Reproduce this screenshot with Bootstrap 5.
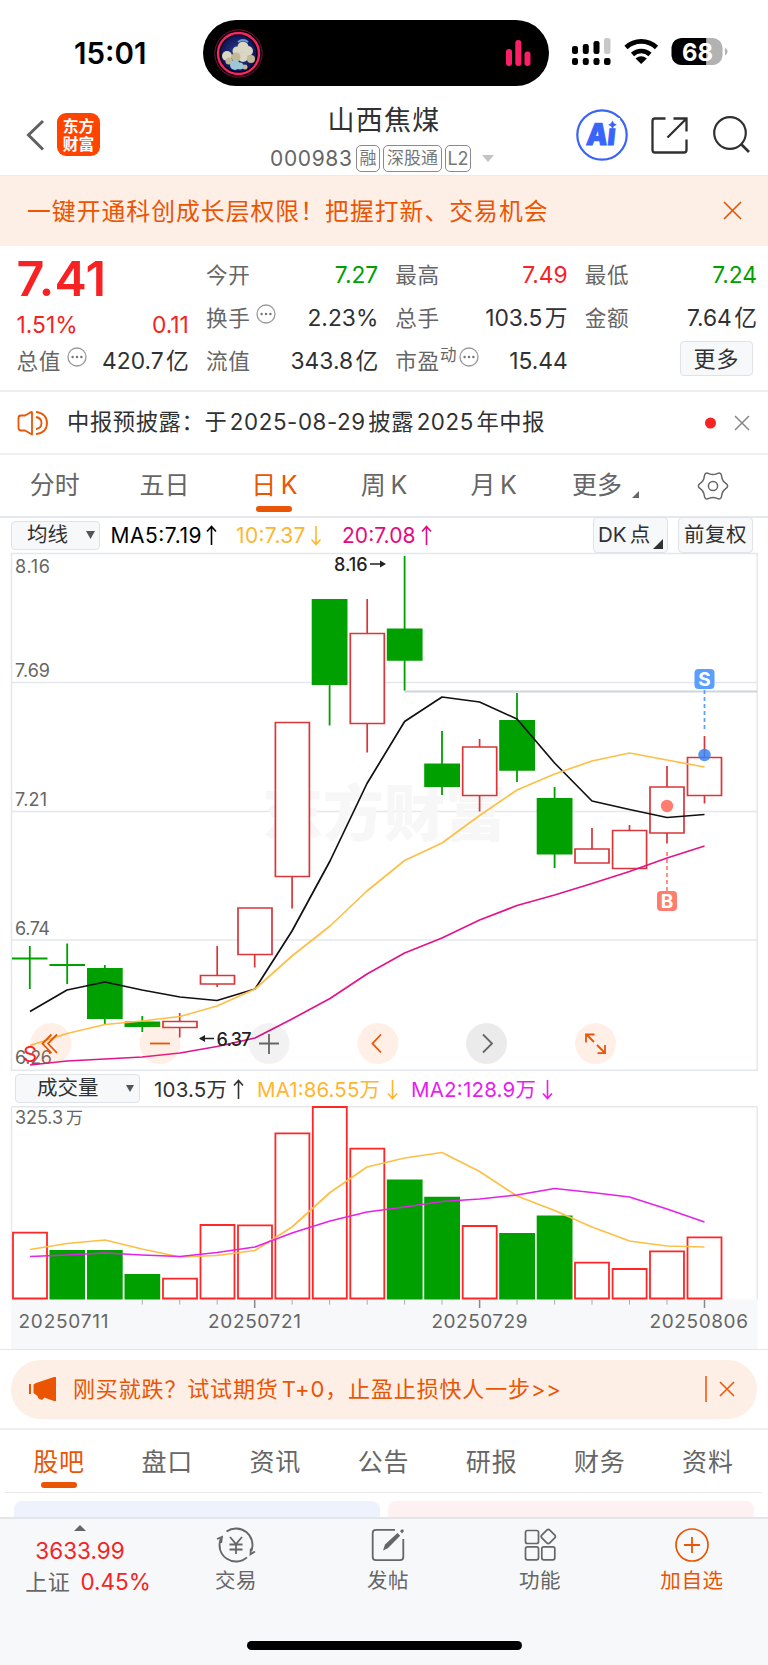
<!DOCTYPE html>
<html lang="zh-CN">
<head>
<meta charset="utf-8">
<meta name="viewport" content="width=device-width, initial-scale=1">
<title>山西焦煤 000983</title>
<link href="https://cdn.jsdelivr.net/npm/bootstrap@5.3.0/dist/css/bootstrap.min.css" rel="stylesheet">
<style>
:root{--o:#ea5504;--r:#f62223;--g:#00a000;--t:#303133;--m:#666;--ln:#ebebee}
body{font-family:Inter,"Noto Sans CJK SC",sans-serif;color:var(--t);background:#fff;width:768px;height:1665px;overflow:hidden;line-height:1}
svg{display:block;flex:none}
svg text{font-family:Inter,"Noto Sans CJK SC",sans-serif}
.c-o{color:var(--o)}.c-r{color:var(--r)}.c-g{color:var(--g)}.c-m{color:var(--m)}
.statusbar{height:86px}
.clock{width:202.500px;padding-left:74px;font-size:29.5px;font-weight:600;color:#000;padding-top:33px;height:86px;line-height:40px}
.island{width:346px;height:66px;margin-top:20px;background:#000;border-radius:33px;padding:0 18px 0 11px}
.topnav{height:90px;display:grid;grid-template-columns:270px 228px 270px;border-bottom:1px solid var(--ln)}
.stockname{font-size:27px;letter-spacing:1.3px;height:36px;line-height:36px;color:#303133}
.codeline{height:28px;font-size:21px;letter-spacing:.65px}
.tagbox{border:1.3px solid #8a8a8a;border-radius:5px;height:27px;line-height:25px;font-size:17px;letter-spacing:0;color:#777;text-align:center}
.promo{height:70px;background:#fdeee6;padding:2px 26px 0 27px;font-size:23.8px;letter-spacing:1.04px;color:var(--o)}
.quotes{height:146px;display:grid;grid-template-columns:repeat(4,172.4px);column-gap:17px;padding:8px 0 0 16.5px;border-bottom:2px solid #efeff1}
.qrow{height:43px;font-size:22.8px;word-spacing:-4px}
.qrow .lbl{font-size:21.6px;letter-spacing:.7px;color:var(--m)}
.price{height:56px;font-size:48.5px;font-weight:600;line-height:50px;letter-spacing:.3px}
.morebtn{width:73px;height:35px;font-size:22px;letter-spacing:1px;background:#f7f8fa;border:1px solid #dfe2e8;border-radius:4px;margin-right:4px;margin-top:1px}
.notice{height:63px;border-bottom:2px solid #efeff1;padding-left:17px;padding-right:18px;font-size:22.3px;letter-spacing:.6px;word-spacing:-4.3px}
.tabbar{height:63px;border-bottom:2px solid #e6e8ef;font-size:25px;color:var(--m);word-spacing:-2.5px}
.tabbar>div,.tabbar2>div{flex:1 1 0;position:relative;text-align:center}
.cur::after{content:"";position:absolute;left:50%;margin-left:-18px;width:36px;height:6px;border-radius:3px;background:var(--o)}
.tabbar .cur::after{bottom:-1px}
.tabbar>div{height:56px;line-height:61px}
.marow{height:34px;font-size:21px;padding-left:11px}
.marow2{height:35px;font-size:21px;padding-left:15px}
.pick{background:#f7f8fa;border:1px solid #dfe2e8;border-radius:4px;height:29px;color:var(--t);font-size:20.5px;word-spacing:-2.5px}
.tall{height:36px}
.pillwrap{height:81px;border-top:1px solid #e6e6e9;border-bottom:2px solid #efeff1;padding:0 11px}
.pill{height:59px;background:#fdeee6;border-radius:30px;padding:0 22px 0 17px;color:var(--o);font-size:22px;letter-spacing:.85px;word-spacing:-4px}
.tabbar2{height:63px;margin:0 6px 0 5px;border-bottom:1.5px solid #e9e9ec;font-size:25px;letter-spacing:.8px;color:var(--m)}
.tabbar2>div{line-height:65px}
.tabbar2 .cur::after{top:52px}
.feed{height:24px;padding:8px 14px 0 14px}
.feed>div{flex:1;border-radius:8px 8px 0 0;height:16px}
.dock{height:148px;background:#f7f8fa;border-top:2px solid #e3e5e9;font-size:20.5px;letter-spacing:.6px;color:var(--m)}
.dock .item{width:152px;padding-top:8px}
.dock .item span{margin-top:6px;line-height:24px}
.homebar{width:275px;height:9px;border-radius:5px;background:#000;margin-top:13px}
</style>
</head>
<body>
<div class="statusbar d-flex">
  <div class="clock">15:01</div>
  <div class="island d-flex align-items-center justify-content-between">
    <svg width="49" height="49" viewBox="0 0 49 49"><defs><radialGradient id="sky"><stop offset="0" stop-color="#2b4a86"/><stop offset="1" stop-color="#11115e"/></radialGradient></defs>
      <circle cx="24.500" cy="24.500" r="23.700" fill="none" stroke="#7a1238"/><circle cx="24.500" cy="24.500" r="20.500" fill="none" stroke="#fb2468" stroke-width="2.400"/><circle cx="24.500" cy="24.500" r="18" fill="url(#sky)"/>
      <g fill="#d9d6c4"><circle cx="29" cy="18" r="5.500"/><circle cx="23" cy="22" r="4.500"/><circle cx="34" cy="22" r="5"/><circle cx="13" cy="27" r="5"/><circle cx="29" cy="28" r="5"/></g><g fill="#c3b897"><circle cx="22" cy="28" r="4.500"/><circle cx="37" cy="30" r="4"/><circle cx="15" cy="32" r="3.500"/><circle cx="31" cy="38" r="2.500"/></g><g fill="#9cc8d8"><circle cx="21" cy="36" r="5"/><circle cx="26" cy="37" r="3.500"/></g><path d="M24 13q5-4 10 0" stroke="#6f9fd0" stroke-width="2" fill="none"/></svg>
    <svg width="25" height="26" viewBox="0 0 25 26"><g fill="#ff1f68"><rect x="0" y="9" width="6" height="17" rx="3"/><rect x="9.300" y="0" width="6" height="26" rx="3"/><rect x="18.500" y="11.500" width="6" height="14.500" rx="3"/></g></svg>
  </div>
  <svg width="219" height="86" viewBox="548.500 0 219 86">
    <g><rect x="571.500" y="46" width="6" height="8" rx="2.200"/><rect x="582.300" y="44" width="6" height="10" rx="2.200"/><rect x="593" y="41" width="6" height="13" rx="2.200"/><rect x="603.500" y="38" width="6.500" height="16" rx="2.200" fill="#c8c8c8"/><rect x="571.500" y="58" width="6" height="7" rx="2.200"/><rect x="582.300" y="58" width="6" height="7" rx="2.200"/><rect x="593" y="58" width="6" height="7" rx="2.200"/><rect x="603.500" y="58" width="6.500" height="7" rx="2.200"/></g>
    <g fill="none" stroke="#000" stroke-width="4.600"><path d="M625.500 47.500a22 22 0 0 1 30.500 0"/><path d="M632 54.500a12.800 12.800 0 0 1 17.500 0"/></g><path d="M640.700 64l-5.700-5.500q5.700-4.600 11.400 0z"/>
    <path d="M681 38h25v27h-25a10 10 0 0 1-10-9v-9a10 10 0 0 1 10-9z"/><path d="M706 38h6a10 10 0 0 1 10 9v9a10 10 0 0 1-10 9h-6z" fill="#b2b2b2"/><path d="M724.500 47.500q5 4 0 8z" fill="#b2b2b2"/>
    <text x="681.500" y="60.500" font-size="24.500" font-weight="700" fill="#fff" textLength="31" lengthAdjust="spacingAndGlyphs">68</text>
  </svg>
</div>

<div class="topnav">
  <div class="d-flex align-items-center" style="padding-left:26px;padding-top:8px">
    <svg width="31" height="32" viewBox="0 0 31 32"><path d="M17 2L2.500 16L17 30.500" fill="none" stroke="#606060" stroke-width="3"/></svg>
    <svg width="43" height="43" viewBox="0 0 43 43"><rect width="43" height="43" rx="9" fill="#ff4400"/><g fill="#fff" font-size="15.800" font-weight="700" text-anchor="middle"><text x="21.500" y="19">东方</text><text x="21.500" y="36.800">财富</text></g></svg>
  </div>
  <div class="d-flex flex-column" style="padding-top:17px">
    <div class="stockname text-center">山西焦煤</div>
    <div class="codeline d-flex align-items-center c-m" style="margin-top:5px">
      <span style="width:86px">000983</span><span class="tagbox" style="width:24px">融</span><span class="tagbox" style="width:59px;margin-left:3px">深股通</span><span class="tagbox" style="width:26px;margin-left:3px;font-size:18px">L2</span>
      <svg width="12" height="7" viewBox="0 0 12 7" style="margin-left:11px"><path d="M0 0h12L6 7z" fill="#c4c4c4"/></svg>
    </div>
  </div>
  <div class="d-flex align-items-center" style="padding-left:78px;padding-top:9px">
    <svg width="52" height="52" viewBox="0 0 52 52"><circle cx="26" cy="26" r="24.700" fill="none" stroke="#3864fa" stroke-width="2.200"/><g transform="skewX(-6)"><text x="13.500" y="36" font-size="30" font-weight="900" fill="#3864fa" stroke="#3864fa" stroke-width="1" textLength="29" lengthAdjust="spacingAndGlyphs">Ai</text></g><path d="M32 9h12v10H31z" fill="#fff"/><path d="M36.500 11.500l1.500 2.800 2.800 1.500-2.800 1.500L36.500 20 35 17.300l-2.800-1.500L35 14.300z" fill="#3864fa"/></svg>
    <svg width="37" height="37" viewBox="0 0 37 37" style="margin-left:23px"><path d="M14.500 1.500H4Q1.500 1.500 1.500 4V33Q1.500 35.500 4 35.500H33Q35.500 35.500 35.500 33V22.500M22.500 1.500H35.500V14.500M35 2L16.500 20.500" fill="none" stroke="#303030" stroke-width="2.300"/></svg>
    <svg width="38" height="38" viewBox="0 0 38 38" style="margin-left:25px"><circle cx="17" cy="17" r="15.800" fill="none" stroke="#303030" stroke-width="2.200"/><path d="M28.500 28.500l7.500 7.500" stroke="#303030" stroke-width="2.600"/></svg>
  </div>
</div>

<div class="promo d-flex align-items-center justify-content-between">
  <span>一键开通科创成长层权限！把握打新、交易机会</span>
  <svg width="19" height="19" viewBox="0 0 19 19" style="margin-top:-3px"><path d="M1 1l17 17M18 1L1 18" stroke="#ea5504" stroke-width="1.700"/></svg>
</div>

<div class="quotes">
  <div>
    <div class="price c-r">7.41</div>
    <div class="qrow d-flex align-items-center justify-content-between c-r" style="height:30px"><span>1.51%</span><span>0.11</span></div>
    <div class="qrow d-flex align-items-center"><span class="lbl">总值</span><svg width="20" height="20" viewBox="0 0 20 20" style="margin:-9px 0 0 6px"><use href="#more"/></svg><span class="ms-auto">420.7 亿</span></div>
  </div>
  <div>
    <div class="qrow d-flex align-items-center justify-content-between"><span class="lbl">今开</span><span class="c-g">7.27</span></div>
    <div class="qrow d-flex align-items-center"><span class="lbl">换手</span><svg width="20" height="20" viewBox="0 0 20 20" style="margin:-9px 0 0 6px"><g id="more"><circle cx="10" cy="10" r="9" fill="none" stroke="#999" stroke-width="1.300"/><g fill="#777"><circle cx="5.600" cy="10" r="1.250"/><circle cx="10" cy="10" r="1.250"/><circle cx="14.400" cy="10" r="1.250"/></g></g></svg><span class="ms-auto">2.23%</span></div>
    <div class="qrow d-flex align-items-center justify-content-between"><span class="lbl">流值</span><span>343.8 亿</span></div>
  </div>
  <div>
    <div class="qrow d-flex align-items-center justify-content-between"><span class="lbl">最高</span><span class="c-r">7.49</span></div>
    <div class="qrow d-flex align-items-center justify-content-between"><span class="lbl">总手</span><span>103.5 万</span></div>
    <div class="qrow d-flex align-items-center"><span class="lbl">市盈</span><span class="c-m" style="font-size:16.5px;margin-top:-13px">动</span><svg width="20" height="20" viewBox="0 0 20 20" style="margin:-9px 0 0 3px"><use href="#more"/></svg><span class="ms-auto">15.44</span></div>
  </div>
  <div>
    <div class="qrow d-flex align-items-center justify-content-between"><span class="lbl">最低</span><span class="c-g">7.24</span></div>
    <div class="qrow d-flex align-items-center justify-content-between"><span class="lbl">金额</span><span>7.64 亿</span></div>
    <div class="d-flex justify-content-end"><div class="morebtn d-flex align-items-center justify-content-center">更多</div></div>
  </div>
</div>

<div class="notice d-flex align-items-center">
  <svg width="50" height="26" viewBox="0 0 50 26"><path d="M15 1.500V24.500L8 20.500H4Q1.500 20.500 1.500 18V8Q1.500 5.500 4 5.500H8L15 1.500M19 7Q24.500 8 24.500 13T19 19M19 1.800Q30 3.500 30 13T19 24.200" fill="none" stroke="#ea5504" stroke-width="1.800" stroke-linejoin="round"/></svg>
  <span>中报预披露：于 2025-08-29 披露 2025 年中报</span>
  <svg class="ms-auto" width="45" height="16" viewBox="0 0 45 16"><circle cx="5.500" cy="8" r="5.500" fill="#f62223"/><path d="M30 1l14 14M44 1L30 15" stroke="#888" stroke-width="1.500"/></svg>
</div>

<div class="tabbar d-flex">
  <div>分时</div><div>五日</div><div class="cur c-o">日 K</div><div>周 K</div><div>月 K</div>
  <div class="d-flex justify-content-center"><span style="margin-left:4px">更多</span><svg width="7" height="7" viewBox="0 0 7 7" style="margin:36px 0 0 10px"><path d="M7 0v7H0z" fill="#666"/></svg></div>
  <div class="d-flex justify-content-center pt-3"><svg width="32" height="30" viewBox="-16 -15 32 30"><path d="M12.800 2.600Q9.100 5.250 8.650 9.800Q8.200 14.300 4.100 12.400Q0 10.500-4.100 12.400Q-8.200 14.300-8.650 9.800Q-9.100 5.250-12.800 2.600Q-16.500 0-12.800-2.600Q-9.100-5.250-8.650-9.800Q-8.200-14.300-4.100-12.400Q0-10.500 4.100-12.400Q8.200-14.300 8.650-9.800Q9.100-5.250 12.800-2.600Q16.500 0 12.800 2.600z" fill="none" stroke="#666" stroke-width="1.500"/><circle r="4.600" fill="none" stroke="#666" stroke-width="1.500"/></svg></div>
</div>

<div class="marow d-flex align-items-center">
  <div class="pick d-flex align-items-center" style="width:89px;padding-left:15px">均线<svg width="9" height="8" viewBox="0 0 9 8" style="margin-left:18px"><path d="M0 0h9L4.500 8z" fill="#555"/></svg></div>
  <svg width="482" height="34" viewBox="100 518 482 34" font-size="21"><text x="110.500" y="543" textLength="91" fill="#000">MA5:7.19</text><text x="236" y="543" textLength="69.500" fill="#ffb62f">10:7.37</text><text x="342" y="543" textLength="73.500" fill="#e5097f">20:7.08</text><g fill="none" stroke-width="1.600"><path d="M211.500 545v-18.500M207 531.500l4.500-5 4.500 5" stroke="#000"/><path d="M316 526v18.500M311.500 539.500l4.500 5 4.500-5" stroke="#ffb62f"/><path d="M426.500 545v-18.500M422 531.500l4.500-5 4.500 5" stroke="#e5097f"/></g></svg>
  <div class="pick tall d-flex align-items-center" style="margin-left:11px;width:75px;padding-left:4px">DK 点<svg width="10" height="10" viewBox="0 0 10 10" style="margin:18px 0 0 3px"><path d="M10 0v10H0z" fill="#303133"/></svg></div>
  <div class="pick tall d-flex align-items-center justify-content-center" style="margin-left:10px;width:75px;letter-spacing:.5px">前复权</div>
</div>

<svg width="768" height="519" viewBox="0 552 768 519" fill="none">
  <g stroke="#e4e7ee" stroke-width="1.500"><path d="M11.500 553.500H757.200V1070.200H11.500z"/><path d="M11.500 682.500H757M11.500 811.500H757M11.500 940H757"/></g>
  <text x="262" y="836" font-size="61" font-weight="900" fill="#f7f7f7" textLength="244">东方财富</text>
  <path d="M404.600 691.500H757" stroke="#d0d5db" stroke-width="2"/>
  <g font-size="18" fill="#666"><text x="15" y="572.500" textLength="35">8.16</text><text x="15" y="676.500" textLength="35">7.69</text><text x="15" y="805.500" textLength="32">7.21</text><text x="15" y="934.500" textLength="35">6.74</text><text x="15" y="1064" textLength="37">6.26</text></g>
  <g stroke="#d9363a" stroke-width="1.700" fill="#fff">
    <path d="M163 1021.500h34v6h-34zM200.500 975.500h34v8.500h-34zM238 908h34v46.500h-34zM275.400 722.500h34v154h-34zM350.300 633.500h34v90h-34zM462.700 747h34v48.500h-34zM575 849h34v14h-34zM612.600 830.500h34v38h-34zM650 787h34v46h-34zM687.500 757.500h34v38h-34z"/>
    <path d="M179.700 1013v8M179.700 1028v9.500M217.200 946v29M217.200 984v3M254.700 955v12.500M292.100 877v31.500M367.200 599v34M367.200 724v28.500M479.600 739v8M479.600 796v15.500M592 828v21M629.500 825v5M667 766v21M667 833v10.500M704.500 736v21M704.500 796v7.500"/></g>
  <g fill="#00a000"><path d="M87 968h35.700v51H87zM124.500 1021.500h35.700v5.500h-35.700zM311.700 599h35.800v86h-35.800zM386.800 628.500h35.800v32.200h-35.800zM424.200 763.500H460V787h-35.800zM499.200 720H535v50.700h-35.800zM536.700 798h35.800v56.500h-35.800z"/><path stroke="#00a000" stroke-width="1.800" d="M12 958.500h35.500M29.800 946v43M49.500 965H85M67.200 943.500V984M104.800 965v59M142.300 1016v16M329.600 685v40.500M404.600 556v134.500M442 731v64M517 693v89M554.600 787v81"/></g>
  <g stroke-width="1.700" stroke-linejoin="round">
    <path stroke="#111" d="M30 1011.500L67 990L105 982L142 990L180 997L217 1000.500L255 989L292 931L330 861L367 783.500L404.600 721.500L442 697L479.600 702L517 719L554.600 763L592 801L629.500 809.500L667 817.500L704.500 814.500"/>
    <path stroke="#ffbe46" d="M30 1045.500L67 1033.500L105 1024.500L142 1021L180 1016.500L217 1006L255 989L292 956L330 926L367 891L404.600 860.500L442 843L479.600 815.500L517 790L554.600 774L592 761L629.500 753L667 760L704.500 767"/>
    <path stroke="#e2148a" d="M30 1065L67 1061L105 1059L142 1057L180 1053L217 1046.500L255 1038L292 1019L330 998.500L367 974L404.600 953L442 938L479.600 920L517 905.500L554.600 895L592 883.500L629.500 871.500L667 858L704.500 846"/></g>
  <g font-size="18" font-weight="500" fill="#222"><text x="334" y="571" textLength="33.500">8.16</text><text x="216.500" y="1045.500" textLength="35">6.37</text></g>
  <path d="M370 564h14M200 1038.500h14" stroke="#222" stroke-width="1.600"/><path d="M386 564l-6-3.500v7zM199 1038.500l6-3.500v7z" fill="#222"/>
  <path d="M704.500 690v42" stroke="#5a9eff" stroke-width="1.700" stroke-dasharray="4 3"/><path d="M667 852v40" stroke="#ff7d6e" stroke-width="1.700" stroke-dasharray="4 3"/>
  <rect x="694.500" y="669" width="20" height="20" rx="4" fill="#5a9eff"/><rect x="657" y="891" width="20" height="20" rx="4" fill="#ff7d6e"/>
  <g font-size="19" font-weight="700" fill="#fff" text-anchor="middle"><text x="704.500" y="686">S</text><text x="667" y="908">B</text></g>
  <circle cx="704.500" cy="755" r="6.200" fill="#3b82f6" opacity=".85"/><circle cx="667" cy="806" r="6.200" fill="#ff7d6e"/>
  <g fill="#ff7832" fill-opacity=".12"><circle cx="51" cy="1043.500" r="20.500"/><circle cx="160" cy="1043.500" r="20.500"/><circle cx="378" cy="1043.500" r="20.500"/><circle cx="595.500" cy="1043.500" r="20.500"/></g>
  <circle cx="269" cy="1043.500" r="20.500" fill="#000" fill-opacity=".05"/><circle cx="486.500" cy="1043.500" r="20.500" fill="#000" fill-opacity=".08"/>
  <g stroke="#ea5504" stroke-width="1.800"><path d="M51.500 1034.500l-9 9 9 9.500M57 1034.500l-9 9 9 9.500"/><path d="M150 1043.500h20"/><path d="M381 1034.500l-8.500 9 8.500 9"/><path d="M594 1042l-8-8M586 1042.500V1034.500H594.500M597 1045l8 8M597.500 1053.200H605V1045"/></g>
  <path d="M259 1043.500h20M269 1034v20M483 1034.500l9 9-9 9" stroke="#666" stroke-width="1.800"/>
  <text x="23" y="1061.500" font-size="22" fill="#ff1e1e">S</text>
</svg>

<div class="marow2 d-flex align-items-center">
  <div class="pick d-flex align-items-center" style="width:125px;padding-left:21px">成交量<svg width="8" height="7" viewBox="0 0 8 7" style="margin-left:27px"><path d="M0 0h8L4 7z" fill="#555"/></svg></div>
  <svg width="440" height="34" viewBox="140 1071 440 34" font-size="20.500"><text x="154" y="1095.500" textLength="73" fill="#303133">103.5万</text><text x="257" y="1095.500" textLength="123" fill="#ffb62f">MA1:86.55万</text><text x="411" y="1095.500" textLength="125" fill="#e81cf0">MA2:128.9万</text><g fill="none" stroke-width="1.600"><path d="M238.500 1098v-18.500M234 1084.500l4.500-5 4.500 5" stroke="#303133"/><path d="M392.500 1079v18.500M388 1092.500l4.500 5 4.500-5" stroke="#ffb62f"/><path d="M547.500 1079v18.500M543 1092.500l4.500 5 4.500-5" stroke="#e81cf0"/></g></svg>
</div>

<svg width="768" height="243" viewBox="0 1106 768 243" fill="none">
  <path d="M11 1299.500h746.500v50H11z" fill="#f7f8fa"/>
  <path d="M11.500 1299.500V1106.700M757.200 1299.500V1106.700M11.500 1106.700H757" stroke="#e4e7ee" stroke-width="1.400"/>
  <text x="15" y="1123.500" font-size="18" fill="#666" textLength="48">325.3</text><text x="66" y="1123.500" font-size="17" fill="#666">万</text>
  <g fill="#fff" stroke="#ff2626" stroke-width="1.800"><path d="M13 1298.500V1232.700h34V1298.500zM163 1298.500V1278.700h34V1298.500zM200.500 1298.500V1225h34V1298.500zM238 1298.500V1225.300h34V1298.500zM275.400 1298.500V1133.300h34V1298.500zM312.800 1298.500V1107h34V1298.500zM350.300 1298.500V1148.600h34V1298.500zM462.700 1298.500V1226h34V1298.500zM575 1298.500V1262.700h34V1298.500zM612.600 1298.500V1269h34V1298.500zM650 1298.500V1251.300h34V1298.500zM687.500 1298.500V1237.300h34V1298.500z"/></g>
  <path fill="#00a000" d="M49.500 1250H85v49.500H49.500zM87 1250h35.700v49.500H87zM124.500 1274h35.700v25.500h-35.700zM386.800 1179.500h35.800v120h-35.800zM424.200 1196.700H460v102.800h-35.800zM499.200 1233H535v66.500h-35.800zM536.700 1215.600h35.800v83.900h-35.800z"/>
  <g stroke-width="1.700" stroke-linejoin="round"><path stroke="#ffbe46" d="M30 1249.500L67 1243.500L105 1240L142 1249L180 1257L217 1255.500L255 1250.500L292 1227L330 1192.500L367 1167L404.600 1158L442 1152.500L479.600 1171.500L517 1196L554.600 1210.500L592 1227L629.500 1241L667 1246L704.500 1247"/>
  <path stroke="#e522ea" d="M30 1256.500L67 1255L105 1253L142 1255L180 1256.500L217 1252.500L255 1247L292 1233L330 1221L367 1212L404.600 1207L442 1201.500L479.600 1199L517 1195L554.600 1188.500L592 1192.500L629.500 1197L667 1209L704.500 1222"/></g>
  <path d="M142.300 1300v4.500M179.700 1300v4.500M217.200 1300v4.500M292.100 1300v4.500M329.600 1300v4.500M367.200 1300v4.500M404.600 1300v4.500M442 1300v4.500M517 1300v4.500M554.600 1300v4.500M592 1300v4.500M629.500 1300v4.500M667 1300v4.500" stroke="#aaa"/><path d="M254.700 1300v8M479.600 1300v8M704.500 1300v8" stroke="#888" stroke-width="1.500"/>
  <g font-size="19" fill="#666"><text x="18.500" y="1328" textLength="90">20250711</text><text x="208" y="1328" textLength="93">20250721</text><text x="431.500" y="1328" textLength="96">20250729</text><text x="649.500" y="1328" textLength="98.500">20250806</text></g>
</svg>

<div class="pillwrap d-flex align-items-center">
  <div class="pill d-flex align-items-center w-100">
    <svg width="45" height="26" viewBox="0 0 45 26"><path d="M1 8h2v10H1zM5.500 8.500L8 7 26 1h2v24h-2L16 21.500V22l-2 2-3.500-1.500L9.500 20 5.500 17z" fill="#ea5504"/></svg>
    <span>刚买就跌？试试期货 T+0，止盈止损快人一步&gt;&gt;</span>
    <svg class="ms-auto" width="30" height="28" viewBox="0 0 30 28"><path d="M1 1v26M15 7l14 14M29 7L15 21" stroke="#ea5504" stroke-width="1.500"/></svg>
  </div>
</div>

<div class="tabbar2 d-flex">
  <div class="cur c-o">股吧</div><div>盘口</div><div>资讯</div><div>公告</div><div>研报</div><div>财务</div><div>资料</div>
</div>
<div class="feed d-flex gap-2"><div style="background:#edf2fc"></div><div style="background:#fdf1f2"></div></div>

<div class="dock">
  <div class="d-flex" style="height:109px">
    <div class="d-flex flex-column align-items-center" style="width:160px;padding-top:6px">
      <svg width="12" height="6" viewBox="0 0 12 6"><path d="M6 0l6 6H0z" fill="#666"/></svg>
      <span class="c-r" style="font-size:22.500px;line-height:30px;margin-top:5px;letter-spacing:0">3633.99</span>
      <span class="d-flex align-items-center" style="height:32px;margin-left:16px;font-size:22px;gap:10px">上证<span class="c-r" style="letter-spacing:0;font-size:22.500px">0.45%</span></span>
    </div>
    <div class="item d-flex flex-column align-items-center">
      <svg width="40" height="36" viewBox="-20 -18 40 36"><g fill="none" stroke="#666" stroke-width="1.800"><path d="M-9.500-13.500A16.500 16.500 0 0 1 15.300 6.200M11 12.300A16.500 16.500 0 0 1-15.300-6.200M-19-6l5-2-.8 6M19 6.500l-4.500 2.800L14.800 3.500"/><path d="M-6-8l6 7 6-7M0-1v10M-6.500-.5h13M-6.500 4.500h13"/></g></svg><span>交易</span></div>
    <div class="item d-flex flex-column align-items-center">
      <svg width="36" height="36" viewBox="-18 -18 36 36"><path d="M7-15.200H-12q-3.300 0-3.300 3.200V12q0 3.200 3.300 3.200H12q3.300 0 3.300-3.200V-6" fill="none" stroke="#666" stroke-width="1.800"/><path d="M-5 5.500L-3-.5 9.500-12 12.200-9.200-.2 3.300zM12-14l2-1.700q2 0 1.800 2L14-11.500z" fill="#666"/></svg><span>发帖</span></div>
    <div class="item d-flex flex-column align-items-center">
      <svg width="36" height="36" viewBox="-18 -18 36 36"><g fill="none" stroke="#666" stroke-width="1.700"><rect x="-14.500" y="-14.500" width="13" height="13" rx="2"/><rect x="-14.500" y="1.800" width="13" height="13" rx="2"/><rect x="1.800" y="1.800" width="13" height="13" rx="2"/><path d="M6.800-14.800q1.500-1.500 3 0l5 5q1.300 1.300 0 2.600l-5 5q-1.500 1.500-3 0l-5-5q-1.300-1.300 0-2.600z"/></g></svg><span>功能</span></div>
    <div class="item d-flex flex-column align-items-center c-o">
      <svg width="36" height="36" viewBox="-18 -18 36 36"><path d="M-8 0H8M0-8V8" stroke="#ea5504" stroke-width="1.800"/><circle r="16" fill="none" stroke="#ea5504" stroke-width="1.700"/></svg><span>加自选</span></div>
  </div>
  <div class="homebar mx-auto"></div>
</div>
<script src="https://cdn.jsdelivr.net/npm/bootstrap@5.3.0/dist/js/bootstrap.bundle.min.js"></script>
</body>
</html>
